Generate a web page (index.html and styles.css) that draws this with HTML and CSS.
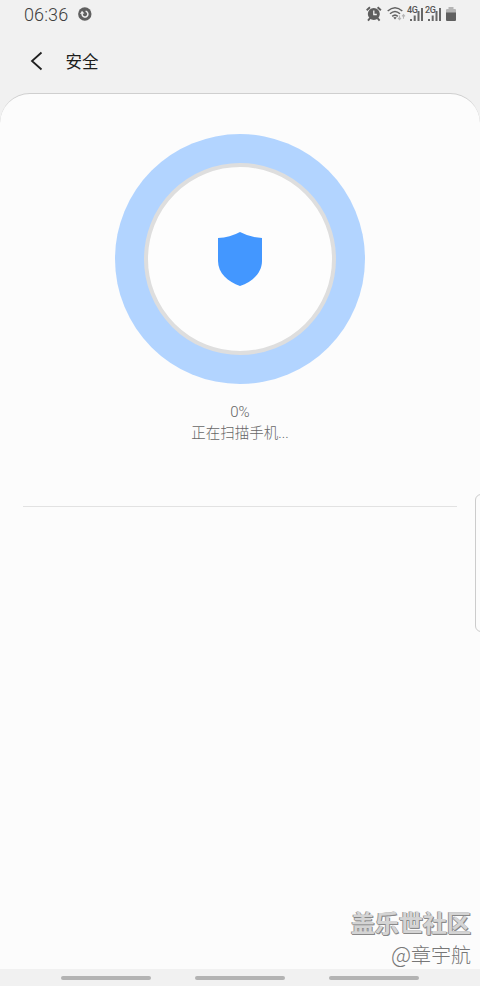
FILE: index.html
```html
<!DOCTYPE html>
<html lang="zh-CN">
<head>
<meta charset="utf-8">
<title>安全</title>
<link rel="stylesheet" href="styles.css">
</head>
<body>
<div class="phone">
  <div class="status">
    <span class="clock">06:36</span>
    <svg class="sync" width="14" height="14" viewBox="0 0 14 14">
      <circle cx="6.8" cy="7" r="6.7" fill="#606060"/>
      <path d="M4.2 6.4A2.9 2.9 0 1 0 7.6 4.3" fill="none" stroke="#f1f1f1" stroke-width="1.5"/>
      <path d="M2 7L4 3.8L6.4 6.6Z" fill="#f1f1f1"/>
    </svg>
    <svg class="alarm" width="16" height="16" viewBox="0 0 16 16">
      <circle cx="7.8" cy="8" r="6" fill="#5e5e5e"/>
      <path d="M.7 4.3L4 1.3M11.6 1.3L14.9 4.3M4 12.2L2 14.6M11.6 12.2L13.6 14.6" stroke="#5e5e5e" stroke-width="1.9"/>
      <path d="M7.8 4.4V8.5H10.8" fill="none" stroke="#f1f1f1" stroke-width="1.3"/>
    </svg>
    <svg class="wifi" width="19" height="16" viewBox="0 0 19 16">
      <path d="M.7 5Q8 -1.6 15.3 5M3 7.8Q8 3.2 13 7.8M5.2 10.4Q8 7.8 10.8 10.4" fill="none" stroke="#626262" stroke-width="1.5"/>
      <path d="M6.3 11.6Q8 10.2 9.7 11.6L8 13.6Z" fill="#626262"/>
      <path d="M12.5 9.4V13.6M11 11.9L12.5 13.7L14 11.9M16.5 12.7V8.8M15 10.4L16.5 8.7L18 10.4" fill="none" stroke="#b5b5b5" stroke-width="1.1"/>
    </svg>
    <div class="signal"><span class="net">4G</span>
      <svg width="18" height="15" viewBox="0 0 18 15"><path d="M3 13h2v2H3zM6.7 9.5h2V15h-2zM10.5 5h2v10h-2zM14 2h2v13h-2z" fill="#676767"/></svg>
    </div>
    <div class="signal"><span class="net">2G</span>
      <svg width="18" height="15" viewBox="0 0 18 15"><path d="M3 13h2v2H3zM6.7 9.5h2V15h-2zM10.5 5h2v10h-2zM14 2h2v13h-2z" fill="#676767"/></svg>
    </div>
    <svg class="battery" width="10" height="14" viewBox="0 0 10 14">
      <path d="M0 6V3Q0 2 1 2H2.5V0H7.5V2H9Q10 2 10 3V6Z" fill="#b5b5b5"/>
      <path d="M0 5.5H10V13Q10 14 9 14H1Q0 14 0 13Z" fill="#606060"/>
    </svg>
  </div>
  <header class="appbar">
    <svg width="14" height="20" viewBox="0 0 14 20"><path d="M11.5 1.5L2 10L11.5 18.5" fill="none" stroke="#202020" stroke-width="1.8"/></svg>
    <h1 class="title">安全</h1>
  </header>
  <main class="panel">
    <div class="ring"><div class="dial">
      <svg width="44" height="54" viewBox="0 0 44 54"><path d="M22 0Q32 5.5 44 6V29C44 41 34 50 22 54C10 50 0 41 0 29V6Q12 5.5 22 0Z" fill="#4397ff"/></svg>
    </div></div>
    <p class="percent">0%</p>
    <p class="message">正在扫描手机...</p>
    <hr class="rule">
    <div class="watermark">
      <p class="community">盖乐世社区</p>
      <p class="author"><span class="at">@</span>章宇航</p>
    </div>
  </main>
  <nav class="nav"><span class="pill"></span><span class="pill"></span><span class="pill"></span></nav>
  <div class="edge"></div>
</div>
</body>
</html>
```
FILE: styles.css
```css
* { box-sizing: border-box; }
body { margin: 0; font-family: Roboto, "Noto Sans CJK SC", sans-serif; }
h1, p { margin: 0; font-weight: 400; }
svg { display: block; flex: none; }
.phone {
  position: relative;
  display: flex;
  flex-direction: column;
  width: 480px;
  height: 986px;
  overflow: hidden;
  background: #f1f1f1;
}
.status { display: flex; height: 30px; padding: 6px 0 0 24px; }
.clock { width: 54px; font-size: 18px; line-height: 18px; font-weight: 300; letter-spacing: .1px; color: #404040; }
.sync { margin-top: 1px; }
.alarm { margin-left: 274px; }
.wifi { margin-left: 5px; }
.signal { position: relative; width: 18px; height: 15px; }
.wifi + .signal { margin-left: 1px; }
.net {
  position: absolute;
  left: 0;
  top: 0;
  padding-right: 1px;
  font-size: 9px;
  line-height: 8px;
  font-weight: 500;
  letter-spacing: -.4px;
  color: #555;
}
.battery { margin: 1px 0 0 3px; }
.appbar { display: flex; align-items: center; height: 63px; padding: 0 0 2px 30px; }
.title { margin-left: 21.5px; padding-top: 4px; font-size: 16.5px; line-height: 24px; color: #1c1c1c; }
.panel {
  display: flex;
  flex-direction: column;
  align-items: center;
  height: 876px;
  padding-top: 40px;
  border-top: 1px solid #cfcfcf;
  border-radius: 30px 30px 0 0;
  background: #fcfcfc;
}
.ring { width: 250px; height: 250px; padding: 29px; border-radius: 50%; background: #b2d4ff; }
.dial {
  display: flex;
  align-items: center;
  justify-content: center;
  width: 192px;
  height: 192px;
  border: 4px solid #dedede;
  border-radius: 50%;
  background: #fdfdfd;
}
.percent { margin-top: 18px; font-size: 15px; line-height: 20px; font-weight: 300; color: #666; }
.message { font-size: 14.5px; line-height: 24px; font-weight: 300; color: #666; }
.rule { width: 434px; height: 1px; margin: 60px 0 0; border: 0; background: #e2e2e2; }
.watermark { width: 100%; margin-top: auto; padding-right: 9px; text-align: right; }
.community {
  font-size: 24px;
  line-height: 30px;
  font-weight: 700;
  color: #d4d4d4;
  text-shadow: -1px 0 0 #999, 0 1px 0 #888, 1px 1px 0 #888;
}
.author { height: 30px; font-size: 20px; line-height: 29px; font-weight: 300; color: #777; }
.at { font-family: "Noto Sans CJK SC", sans-serif; font-size: 22px; }
.nav { display: flex; justify-content: center; gap: 44px; height: 17px; padding-top: 7px; }
.pill { width: 90px; height: 4px; border-radius: 2px; background: #b3b3b3; }
.edge {
  position: absolute;
  top: 494px;
  right: -8px;
  width: 13px;
  height: 138px;
  border: 1px solid #ccc;
  border-radius: 6px;
  background: #fcfcfc;
}
```
